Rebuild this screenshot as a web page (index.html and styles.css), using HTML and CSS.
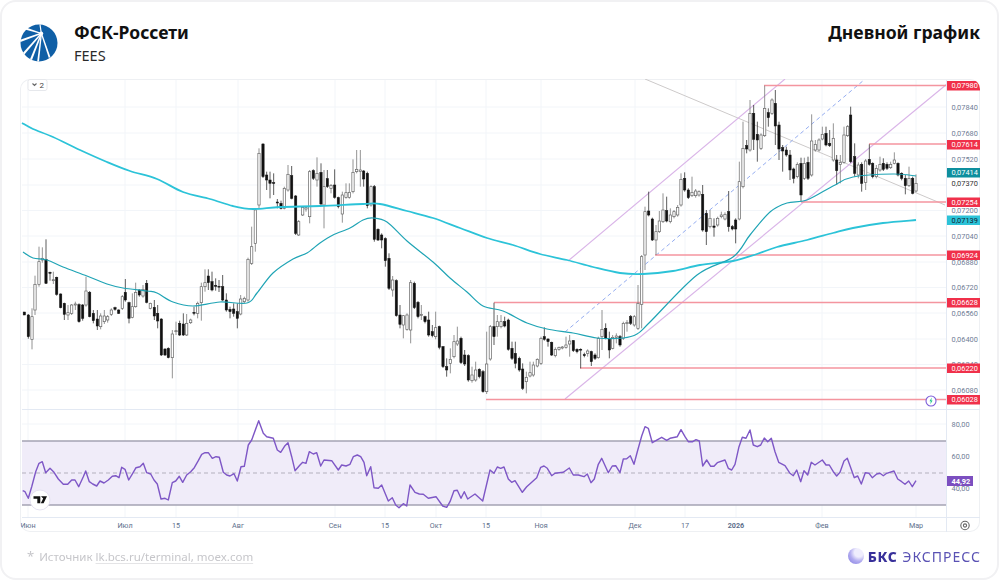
FILE: index.html
```html
<!DOCTYPE html>
<html lang="ru">
<head>
<meta charset="utf-8">
<title>ФСК-Россети — дневной график</title>
<link rel="stylesheet" href="styles.css">
</head>
<body>
<main class="card">
  <header class="head">
    <svg class="logo" viewBox="0 0 38 38" aria-hidden="true">
      <circle cx="19" cy="19" r="18.5" fill="#0f5fa6"/>
      <g fill="#fff">
        <circle cx="21.2" cy="9.4" r="2"/>
        <polygon points="21,8.8 21.4,10 5,5.4 6,3.6"/>
        <polygon points="20.6,8.8 21.4,10 0.5,18 0.2,15.8"/>
        <polygon points="20.8,9 21.8,10 4.4,30.4 3,28.8"/>
        <polygon points="20.8,9.2 22,10 12,36 10,35.2"/>
        <polygon points="20.8,9.4 22,9.6 19,37.6 17.2,37.6"/>
        <polygon points="20.8,9.6 22,9.2 30.4,33 28.8,34"/>
        <polygon points="20.6,8.6 21.8,8.8 20.6,0.4 19.4,0.4"/>
      </g>
    </svg>
    <div class="titles">
      <h1 class="name">ФСК-Россети</h1>
      <p class="ticker">FEES</p>
    </div>
    <h2 class="kind">Дневной график</h2>
  </header>

  <section class="chart">
    <svg id="plot" class="plot" viewBox="20 79 960 453" width="960" height="453" aria-label="Дневной график FEES"></svg>
  </section>

  <footer class="foot">
    <p class="source"><span class="star">*</span>Источник <span class="link">lk.bcs.ru/terminal, moex.com</span></p>
    <div class="brand">
      <span class="sphere"></span>
      <span class="bks">БКС</span>
      <span class="express">ЭКСПРЕСС</span>
    </div>
  </footer>
</main>
<script src="chart.js"></script>
</body>
</html>
```
FILE: styles.css
```css
* { box-sizing: border-box; }
html, body { margin: 0; padding: 0; background: #fff; }
body { width: 1000px; height: 580px; overflow: hidden; font-family: "Noto Sans", "Open Sans", sans-serif; }

.card {
  width: 999px;
  height: 580px;
  border: 2px solid #f1f1f3;
  border-radius: 16px;
  display: flex;
  flex-direction: column;
  padding: 0 17px 0 18px;
  background: #fff;
  filter: blur(0.3px);
}

.head {
  height: 77px;
  display: flex;
  align-items: flex-start;
  flex: none;
}
.logo { width: 38px; height: 38px; margin-top: 22px; flex: none; }
.titles { margin-left: 16px; margin-top: 17px; flex: 1; }
.name { margin: 0; font-size: 17.5px; line-height: 26px; font-weight: 700; color: #111; }
.ticker { margin: 0; font-size: 14.5px; line-height: 20px; color: #2a2a2a; }
.kind { margin: 17px 0 0; font-size: 17.6px; line-height: 26px; font-weight: 700; color: #111; }

.chart {
  height: 453px;
  flex: none;
  border-radius: 10px;
  overflow: hidden;
  box-shadow: inset 0 0 0 1px #eef0f3;
}
.plot { display: block; }

.foot {
  flex: 1;
  display: flex;
  align-items: center;
  justify-content: space-between;
  padding: 2px 0 0 7px;
}
.source { margin: 0; font-size: 11.5px; color: #c6c6ca; }
.star { margin-right: 5px; font-size: 13px; }
.link { text-decoration: underline; text-decoration-color: #e4e4e6; text-underline-offset: 2px; }

.brand { display: flex; align-items: center; margin-right: -1px; }
.sphere {
  width: 16px; height: 16px; border-radius: 50%;
  background: radial-gradient(circle at 68% 28%, #efedfd 0 28%, #b3adf0 55%, #7f78e0 100%);
  margin-right: 4px;
}
.bks { font-size: 14px; font-weight: 800; letter-spacing: 0.6px; color: #38309a; margin-right: 5px; }
.express { font-size: 14px; font-weight: 400; color: #5a52b4; letter-spacing: 1px; }

.gridline { stroke: #f2f5f9; stroke-width: 1; fill: none; }
.sep { stroke: #e3e9f3; stroke-width: 1; fill: none; }
.ma200 { stroke: #2cc3d8; stroke-width: 1.8; fill: none; }
.ma50 { stroke: #1fa4b5; stroke-width: 1.2; fill: none; }
.channel { stroke: #dab5e8; stroke-width: 1.15; fill: none; }
.mid { stroke: #95adf0; stroke-width: 1; stroke-dasharray: 4 3; fill: none; }
.trend { stroke: #cdcaca; stroke-width: 1; fill: none; }
.level { stroke: #f4959f; stroke-width: 1.3; fill: none; }
.band { fill: #f0ecf9; }
.bandline { stroke: #a5a3b3; stroke-width: 1.3; fill: none; }
.bandmid { stroke: #b3b0bd; stroke-width: 1; stroke-dasharray: 4 3; fill: none; }
.rsi { stroke: #7e57c6; stroke-width: 1.4; fill: none; stroke-linejoin: round; }
.wick { stroke: #777; stroke-width: 0.8; fill: none; }
.wick-b { stroke: #333; stroke-width: 0.8; fill: none; }
.body-w { fill: #fff; stroke: #666; stroke-width: 0.7; }
.body-b { fill: #111; stroke: #111; stroke-width: 0.5; }

.axis { font: 7.4px Roboto, sans-serif; fill: #6f7e96; }
.axis-dark { fill: #333; }
.time { font: 7.2px Roboto, sans-serif; fill: #5d6f8c; text-anchor: middle; }
.time-b { font-weight: 700; }
.tag { font: 7.4px Roboto, sans-serif; fill: #fff; }
.tag-dark { fill: #123; }
.tag-rsi { font-weight: 700; }
.red { fill: #f0304a; }
.teal { fill: #0e8f9e; }
.cyan { fill: #2cc3d8; }
.violet { fill: #7c4fc0; }
.badge { fill: #fff; stroke: #e6e8ec; stroke-width: 1; }
.badge-t { font: 8px Roboto, sans-serif; fill: #444; }
.icon { fill: none; stroke: #666; stroke-width: 1.1; }
.ring { fill: #fff; stroke: #7a5bd8; stroke-width: 1.1; }
.bolt { fill: #1cc58c; }
.tvdisc { fill: #fff; stroke: #e6e3f2; stroke-width: 1; }
.tvlogo { fill: #111; }
```
FILE: chart.js
```js
var NS = 'http://www.w3.org/2000/svg';
var plot = document.getElementById('plot');
function el(tag, attrs, text) {
  var e = document.createElementNS(NS, tag);
  for (var k in attrs) e.setAttribute(k, attrs[k]);
  if (text !== undefined) e.textContent = text;
  plot.appendChild(e);
  return e;
}
function line(cls, x1, y1, x2, y2) { el('line', { 'class': cls, x1: x1, y1: y1, x2: x2, y2: y2 }); }
function poly(cls, pts) { el('polyline', { 'class': cls, points: pts.map(function (p) { return p[0] + ',' + p[1]; }).join(' ') }); }
function smooth(cls, pts) {
  var d = 'M' + pts[0][0] + ' ' + pts[0][1];
  for (var i = 1; i < pts.length; i++) {
    var p0 = pts[i - 2] || pts[i - 1], p1 = pts[i - 1], p2 = pts[i], p3 = pts[i + 1] || p2;
    d += 'C' + (p1[0] + (p2[0] - p0[0]) / 6) + ' ' + (p1[1] + (p2[1] - p0[1]) / 6) + ' ' +
      (p2[0] - (p3[0] - p1[0]) / 6) + ' ' + (p2[1] - (p3[1] - p1[1]) / 6) + ' ' + p2[0] + ' ' + p2[1];
  }
  el('path', { 'class': cls, d: d });
}

/* grid */
[28, 125, 176, 238, 335, 385, 436, 486, 541, 635, 685, 736, 822, 916].forEach(function (x) {
  line('gridline', x, 80, x, 517);
});
var ticks = [
  ['0,07840', 107], ['0,07680', 133], ['0,07520', 159], ['0,07200', 210.5], ['0,07040', 236],
  ['0,06880', 262], ['0,06720', 287.5], ['0,06560', 313], ['0,06400', 339], ['0,06240', 364.5], ['0,06080', 390]
];
ticks.forEach(function (t) { line('gridline', 22, t[1], 946, t[1]); });
line('gridline', 22, 185, 946, 185);
[424, 456, 488].forEach(function (y) { line('gridline', 22, y, 946, y); });

/* RSI pane */
el('rect', { 'class': 'band', x: 22, y: 441, width: 924, height: 64 });
line('bandline', 22, 441, 946, 441);
line('bandline', 22, 505, 946, 505);
line('bandmid', 22, 473, 946, 473);

/* drawings */
line('trend', 645, 79, 945, 205);
line('channel', 568, 261, 785, 79);
line('channel', 565, 399, 947, 84);
line('mid', 565, 332, 864, 80);

var levels = [[764, 85.5], [869, 144], [801, 202], [655, 255], [494, 302.5], [580, 368], [486, 399.5]];
levels.forEach(function (l) { line('level', l[0], l[1], 946, l[1]); });

/* candles: [x(zoom), black?, top, bottom, high, low] per crop */
var crops = [
  [20, 130, [[13,1,546,555],[25,1,555,620,552,626],[36,0,560,628,535,658],[45,0,463,540,437,555],[57,0,395,463,350,470],[67,0,385,390,352,398],[78,1,388,460,328,462],[90,1,427,430,425,452],[100,0,449,452,425,462],[110,1,442,493,440,497],[122,1,492,533,490,535],[133,1,520,553,518,570],[144,0,548,555,525,570],[155,0,525,550,522,555],[166,0,522,525,515,540],[177,1,524,575,520,578],[188,1,525,565,522,572],[198,0,483,525,440,530],[209,1,487,560,483,562],[220,1,550,572,540,580],[232,1,567,588,540,600],[242,0,558,590,550,598],[253,0,558,575,540,582],[263,0,560,570,555,578],[274,0,540,553,535,558],[285,1,533,538,530,542],[296,1,540,550,538,552],[307,0,500,535,495,540],[316,1,487,510,447,515],[327,1,518,565,515,580],[337,0,530,562,490,565],[347,0,487,530,458,533],[358,1,480,495,478,500],[369,0,478,498,465,503],[380,1,460,517,450,520],[391,0,520,535,518,538],[403,1,532,558,510,570],[413,1,550,573,525,595],[424,1,567,675,565,678],[435,1,657,675,655,678],[445,1,655,683,652,685],[457,0,612,683,600,745],[468,0,602,605,575,615],[479,1,580,615,572,618],[490,1,582,615,550,618],[500,0,580,615,552,618],[512,0,570,578,566,582],[522,1,547,550,530,556],[533,0,520,550,515,565],[544,0,470,518,458,572],[555,0,458,470,418,485],[565,1,438,458,418,480],[576,1,455,480,425,484],[587,1,466,469,445,482],[597,1,469,471,450,486],[608,1,470,510,435,513],[619,1,510,540,490,545],[630,1,538,545,530,565],[641,1,537,550,520,560],[652,1,545,565,520,595],[662,0,507,552,495,556],[673,0,505,515,500,520],[684,0,388,510,383,515],[695,0,350,400,290,405],[706,0,240,340,235,365],[717,0,70,225,55,235],[729,1,42,140,40,144],[740,1,135,150,125,180],[750,1,150,160,125,205],[761,1,158,160,130,195],[772,1,216,219,207,235],[783,1,220,235,212,238],[793,0,175,235,170,238],[804,0,133,180,105,185],[815,1,137,205,108,208],[827,1,198,310,195,315],[836,0,275,315,270,318],[848,0,232,255,228,258],[858,0,233,237,230,245],[869,0,125,260,120,280],[880,1,122,145,118,150],[891,0,130,150,82,170]]],
  [320, 140, [[3,1,97,192,70,196],[12,0,140,195,90,265],[22,1,116,140,90,144],[33,0,136,145,132,160],[44,1,135,172,88,176],[55,1,173,200,170,205],[67,0,165,222,155,248],[78,0,158,172,130,176],[88,0,157,172,130,176],[99,0,97,155,58,160],[110,0,88,95,30,100],[121,0,90,94,30,140],[131,1,93,117,90,140],[142,1,100,197,95,205],[153,0,140,195,136,200],[163,1,140,298,135,305],[174,1,268,300,265,303],[185,1,285,300,280,325],[196,1,296,362,292,380],[207,1,355,445,340,450],[218,0,420,450,408,470],[229,1,422,527,418,530],[240,1,525,553,495,565],[250,0,527,555,525,595],[261,0,525,568,520,572],[272,0,428,570,420,610],[283,1,430,503,425,507],[294,1,487,530,483,535],[304,0,523,526,495,540],[315,1,530,545,527,550],[326,1,540,585,515,590],[337,1,575,587,555,592],[347,0,563,590,515,598],[358,1,560,622,557,628],[369,1,620,680,618,684],[380,1,680,690,655,710],[391,0,658,670,625,700],[402,0,605,650,585,655],[412,0,603,612,560,618],[423,1,595,668,590,672],[434,1,645,672,630,678],[445,1,647,720,643,725],[456,0,705,722,680,728],[467,0,690,720,665,725],[478,1,688,710,685,715],[489,1,695,755,690,758],[500,0,672,755,575,762],[511,0,560,657,555,662],[522,1,560,590,488,615],[532,0,545,560,525,590],[543,0,545,560,525,565],[554,1,545,558,530,562],[565,1,540,628,536,632],[576,1,625,655,605,660],[586,1,640,670,605,685],[598,1,655,690,650,695],[608,1,687,745,670,750],[619,0,712,725,695,760],[630,0,698,708,665,712],[640,0,675,705,665,710],[652,0,658,678,655,682],[663,0,595,670,590,675],[673,1,590,598,562,602],[684,1,597,605,595,620],[695,1,607,645,605,648],[706,0,628,647,622,652],[717,0,622,628,620,632],[727,0,621,624,618,628],[738,0,615,622,590,626],[749,0,603,612,585,650],[760,1,602,632,600,636],[771,1,628,635,625,640],[782,1,628,630,625,685],[793,1,644,647,638,652],[803,0,633,640,628,650],[814,1,635,665,632,678],[825,1,645,655,640,660],[835,0,595,653,590,656],[846,0,568,590,510,630],[857,1,565,595,550,598],[868,1,595,630,575,655],[878,0,592,625,585,628],[889,0,588,592,580,610],[900,1,590,615,585,620]]],
  [600, 75, [[70,0,745,790,740,795],[81,0,742,746,735,770],[92,1,725,745,720,750],[103,0,725,750,720,755],[114,0,685,760,630,765],[125,0,545,688,540,760],[135,0,410,540,395,585],[146,1,408,420,350,424],[157,1,432,495,428,498],[168,0,470,495,450,540],[178,0,438,470,408,474],[189,0,405,440,355,444],[200,1,407,438,365,442],[211,0,420,440,400,445],[222,0,410,425,405,430],[233,0,397,420,390,425],[243,0,313,390,295,395],[254,1,310,345,292,350],[265,1,345,368,340,372],[276,0,352,362,305,366],[287,0,348,362,342,368],[297,0,350,360,346,365],[308,1,358,465,330,470],[319,1,415,470,405,510],[330,0,430,455,405,460],[342,1,453,457,430,485],[353,0,430,450,425,455],[364,0,420,425,410,430],[375,0,418,432,412,436],[386,1,410,455,348,470],[397,1,455,462,450,466],[407,1,435,462,430,505],[418,0,320,432,260,436],[429,0,220,335,140,340],[440,1,212,222,195,235],[450,0,115,225,75,230],[461,1,115,193,90,225],[472,1,178,195,140,260],[483,0,180,220,175,225],[494,0,100,182,32,186],[505,1,113,128,100,155],[516,0,75,115,70,120],[526,1,85,153,45,210],[537,1,150,222,140,255],[548,1,218,228,210,290],[559,1,225,240,215,245],[570,1,240,285,225,315],[581,1,282,310,278,325],[592,0,268,305,262,310],[603,1,265,360,248,378],[613,0,265,310,248,315],[624,1,262,310,245,315],[635,0,198,300,118,305],[646,0,208,225,195,230],[657,0,195,225,190,230],[667,0,178,192,155,196],[678,1,175,210,155,214],[689,1,205,212,165,216],[700,0,190,255,145,260],[710,1,255,287,240,330],[721,0,262,268,240,325],[732,0,180,262,155,266],[743,0,155,182,150,186],[752,1,120,260,95,264],[764,1,245,295,205,305],[775,0,270,300,262,310],[785,1,268,325,262,350],[797,0,258,322,252,345],[808,1,253,268,208,272],[818,1,265,305,262,310],[829,0,280,305,270,310],[840,0,268,285,245,290],[850,1,265,283,250,288],[861,1,268,280,262,285],[872,0,268,278,260,282],[883,0,255,265,232,268],[894,1,265,300,262,304],[905,1,295,310,292,316],[916,1,310,332,300,358],[927,0,310,332,275,336],[938,1,310,355,305,358],[948,0,325,348,298,352]]]
];
crops.forEach(function (crop) {
  crop[2].forEach(function (c) {
    var x = crop[0] + c[0] / 3, t = crop[1] + c[2] / 3, b = crop[1] + c[3] / 3, hi = crop[1] + c[4] / 3, lo = crop[1] + c[5] / 3;
    line(c[1] ? 'wick-b' : 'wick', x, hi, x, lo);
    el('rect', { 'class': c[1] ? 'body-b' : 'body-w', x: x - 1.15, y: t, width: 2.3, height: Math.max(b - t, 0.8) });
  });
});

/* moving averages */
smooth('ma200', [[22,123],[33,129],[53,137],[80,150],[107,162],[130,171],[157,179],[183,192],[210,199],[233,206],[253,209],[280,207],[320,206],[363,204],[380,204],[407,211],[433,218],[460,228],[487,238],[513,245],[540,254],[567,260],[593,267],[620,273],[643,274],[673,271],[700,265],[733,261],[757,254],[777,247],[807,240],[833,233],[853,228],[883,223],[916,220]]);
smooth('ma50', [[23,252],[33,258],[47,260],[63,267],[87,276],[107,284],[123,288],[147,291],[157,293],[173,302],[193,306],[220,302],[247,303],[257,293],[273,273],[293,259],[307,253],[320,243],[333,235],[350,228],[363,220],[373,218],[387,222],[407,241],[433,262],[450,278],[467,292],[483,306],[503,311],[527,323],[547,329],[573,333],[597,338],[623,338],[637,334],[650,322],[697,275],[733,257],[750,235],[770,212],[787,203],[807,200],[833,186],[853,177],[893,174],[916,176]]);

/* RSI */
var r1 = [[68,257],[75,260],[85,280],[95,245],[107,200],[117,175],[127,170],[137,203],[150,190],[162,202],[175,222],[190,238],[203,238],[215,225],[225,225],[236,245],[250,215],[257,198],[268,230],[278,237],[290,243],[300,228],[312,234],[325,225],[337,214],[347,212],[357,218],[365,187],[375,193],[386,225],[398,205],[408,188],[420,185],[430,175],[440,203],[452,207],[462,225],[472,237],[483,282],[495,280],[505,285],[517,233],[527,228],[538,214],[548,232],[560,210],[572,200],[583,188],[595,167],[605,148],[615,143],[625,143],[637,160],[648,155],[658,157],[670,202],[680,210],[690,213],[702,206],[712,228],[723,185],[733,184],[745,120],[755,105],[776,47],[790,85],[800,95],[820,100],[832,135],[842,142],[855,122],[864,113],[875,155],[885,197],[900,180]];
var r2 = [[8,172],[18,175],[28,140],[40,147],[50,143],[62,183],[72,165],[95,167],[115,195],[125,180],[138,183],[150,178],[160,155],[172,150],[182,155],[192,172],[200,212],[212,185],[222,248],[235,250],[245,240],[265,288],[277,278],[287,300],[297,308],[310,296],[320,303],[330,240],[345,262],[358,267],[370,268],[385,280],[408,275],[428,303],[440,307],[450,290],[462,257],[472,256],[483,280],[493,260],[503,282],[525,267],[548,288],[570,195],[582,205],[592,186],[602,190],[612,186],[625,222],[635,232],[645,227],[667,262],[680,245],[710,218],[722,187],[732,183],[742,190],[755,212],[765,205],[790,202],[808,189],[820,210],[835,210],[852,215],[862,207],[873,233],[883,222],[895,178],[905,160],[925,203],[937,183],[947,182],[960,203]];
var r3 = [[10,162],[20,161],[31,152],[42,178],[52,140],[65,93],[75,65],[85,70],[97,113],[125,97],[140,106],[150,100],[172,95],[183,74],[195,95],[205,110],[218,110],[228,104],[238,108],[248,183],[260,165],[272,184],[282,184],[292,173],[315,165],[325,190],[335,195],[345,178],[357,125],[367,97],[378,100],[390,75],[400,120],[412,125],[422,120],[433,99],[443,110],[454,100],[465,140],[476,172],[495,182],[510,205],[520,212],[530,195],[542,230],[552,197],[563,210],[574,172],[585,180],[607,165],[618,180],[628,180],[640,200],[650,213],[660,202],[672,168],[682,160],[703,218],[713,213],[724,237],[736,203],[747,205],[757,218],[770,207],[780,205],[790,212],[800,205],[822,198],[833,222],[845,230],[855,238],[866,228],[877,245],[888,227]];
function shift(a, ox) { return a.map(function (p) { return [+(ox + p[0] / 3).toFixed(1), +(405 + p[1] / 3).toFixed(1)]; }); }
poly('rsi', shift(r1, 0).concat(shift(r2, 300), shift(r3, 620)));

/* frames */
line('sep', 946.5, 80, 946.5, 532);
line('sep', 22, 409.5, 980, 409.5);
line('sep', 22, 517.5, 980, 517.5);

/* axis text */
ticks.forEach(function (t) { el('text', { 'class': 'axis', x: 951.5, y: t[1] + 2.7 }, t[0]); });
el('text', { 'class': 'axis axis-dark', x: 951.5, y: 185.7 }, '0,07370');
[['80,00', 424], ['60,00', 456], ['40,00', 488.5]].forEach(function (t) { el('text', { 'class': 'axis', x: 951.5, y: t[1] + 2.7 }, t[0]); });

var tags = [['0,07980', 81, 'red'], ['0,07614', 140, 'red'], ['0,07254', 197.5, 'red'], ['0,06924', 250.5, 'red'], ['0,06628', 298, 'red'], ['0,06220', 363.5, 'red'], ['0,06028', 395, 'red'], ['0,07414', 168, 'teal']];
tags.forEach(function (t) {
  el('rect', { 'class': t[2], x: 947, y: t[1], width: 33, height: 9.5 });
  el('text', { 'class': 'tag', x: 951.5, y: t[1] + 7.4 }, t[0]);
});
el('rect', { 'class': 'cyan', x: 947, y: 215.5, width: 33, height: 9.5 });
el('text', { 'class': 'tag tag-dark', x: 951.5, y: 222.9 }, '0,07139');
el('rect', { 'class': 'violet', x: 947, y: 476, width: 26, height: 10 });
el('text', { 'class': 'tag tag-rsi', x: 951.5, y: 483.7 }, '44,92');

[['Июн', 28], ['Июл', 125], ['15', 176], ['Авг', 238], ['Сен', 335], ['15', 385], ['Окт', 436], ['15', 486], ['Ноя', 541], ['Дек', 635], ['17', 685], ['2026', 736, 1], ['Фев', 822], ['Мар', 916]].forEach(function (t) {
  el('text', { 'class': 'time' + (t[2] ? ' time-b' : ''), x: t[1], y: 528 }, t[0]);
});

/* collapse badge */
el('rect', { 'class': 'badge', x: 28, y: 79.5, width: 19, height: 11, rx: 2 });
el('path', { 'class': 'icon', d: 'M32.5 83.5l2 2 2-2' });
el('text', { 'class': 'badge-t', x: 39.5, y: 87.6 }, '2');

/* alert marker */
el('circle', { 'class': 'ring', cx: 931, cy: 401, r: 5 });
el('path', { 'class': 'bolt', d: 'M931.7 397.6l-2.2 3.7h1.3l-.5 3 2.3-3.9h-1.3z' });

/* settings */
el('circle', { 'class': 'icon', cx: 965, cy: 525.5, r: 4.2 });
el('circle', { 'class': 'icon', cx: 965, cy: 525.5, r: 1.6 });

/* TradingView mark */
el('circle', { 'class': 'tvdisc', cx: 40, cy: 500, r: 10 });
el('path', { 'class': 'tvlogo', d: 'M33.5 496.2h6.8v7h-3v-4.4h-3.8zM41 496.2h6l-3.4 7h-2.8l2.4-4.6z' });
```
